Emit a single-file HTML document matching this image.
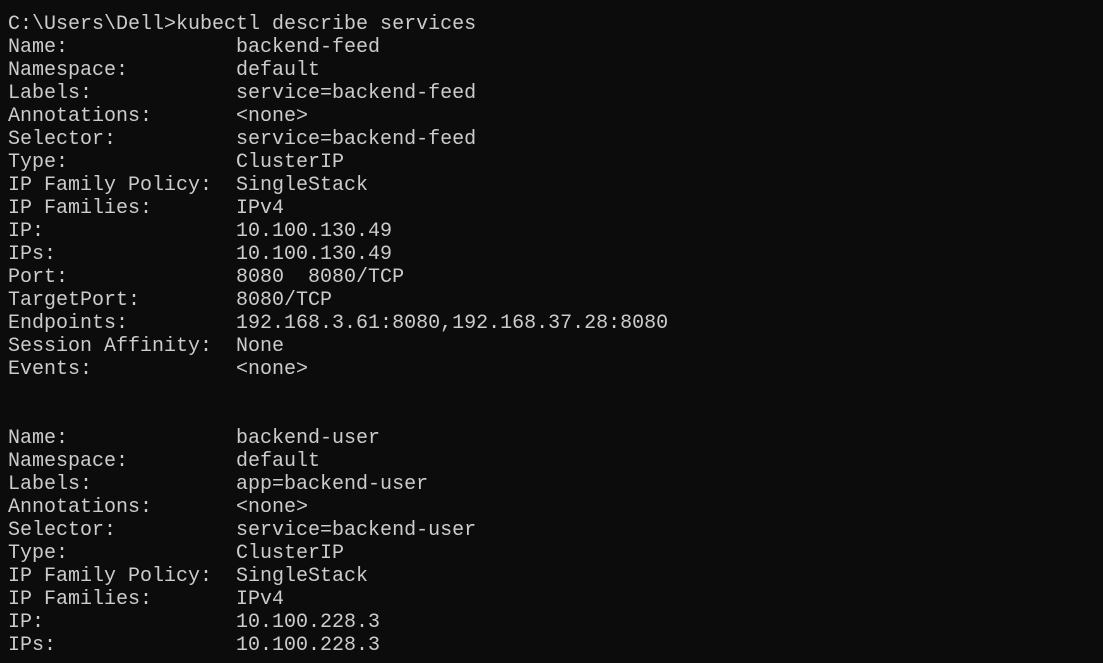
<!DOCTYPE html>
<html><head><style>
html,body{margin:0;padding:0;background:#0c0c0c;width:1103px;height:663px;overflow:hidden}
pre{margin:0;padding:13px 0 0 8px;font-family:"Liberation Mono",monospace;font-size:20px;line-height:23px;color:#cccccc;white-space:pre}
</style></head><body><pre>C:\Users\Dell&gt;kubectl describe services
Name:              backend-feed
Namespace:         default
Labels:            service=backend-feed
Annotations:       &lt;none&gt;
Selector:          service=backend-feed
Type:              ClusterIP
IP Family Policy:  SingleStack
IP Families:       IPv4
IP:                10.100.130.49
IPs:               10.100.130.49
Port:              8080  8080/TCP
TargetPort:        8080/TCP
Endpoints:         192.168.3.61:8080,192.168.37.28:8080
Session Affinity:  None
Events:            &lt;none&gt;


Name:              backend-user
Namespace:         default
Labels:            app=backend-user
Annotations:       &lt;none&gt;
Selector:          service=backend-user
Type:              ClusterIP
IP Family Policy:  SingleStack
IP Families:       IPv4
IP:                10.100.228.3
IPs:               10.100.228.3
</pre></body></html>
